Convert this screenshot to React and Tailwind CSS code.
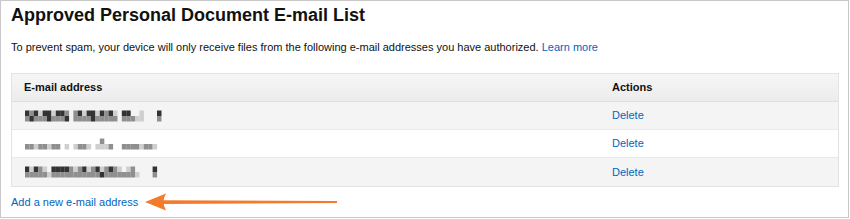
import React from "react";

const rows = [
  [
    [3,2,3,1,3,3,1,3,3,2,0,2,3,1,3,3,1,3,2,3,1,0,3,3,0,0,1,0,0,0,3],
    [2,3,2,2,2,3,2,2,2,3,0,2,2,2,2,3,2,2,2,2,2,0,2,2,2,1,1,0,0,0,2],
  ],
  [
    [0,0,0,0,0,0,0,0,0,0,0,0,0,0,0,0,0,2,0,0,0,0,0,0,0,0,0,0,0,0,0],
    [2,2,1,2,2,1,2,2,0,1,0,1,2,2,1,0,1,1,1,2,0,0,2,2,2,2,1,2,2,1,0],
  ],
  [
    [3,1,3,2,1,0,3,3,3,3,2,1,2,3,1,2,3,1,2,3,2,1,0,1,2,0,0,0,0,3,0],
    [2,2,2,2,2,1,2,2,2,2,2,2,2,2,2,2,2,3,2,2,2,2,2,2,2,1,0,0,0,2,0],
  ],
];
const row2extra = [[13, 1, 2], [16, 1, 3], [17, 1, 3], [19, 1, 3]];
const shades = ["transparent", "#cfcfcf", "#8f8f8f", "#333333"];

function Blur({ data }) {
  return (
    <svg width="140" height="12" viewBox="0 0 140 12">
      {data.map((r, ri) =>
        r.map((v, ci) =>
          v ? (
            <rect key={ri + "-" + ci} x={ci * 4.4} y={ri * 5.5 + 0.5} width="4.5" height="5.5" fill={shades[v]} />
          ) : null
        )
      )}
    </svg>
  );
}

export default function App() {
  return (
    <div
      className="w-[849px] h-[218px] border border-[#c8c8c8] bg-white text-[#111] px-[10px]"
      style={{ fontFamily: '"Liberation Sans", Arial, sans-serif' }}
    >
      <h1 className="text-[18px] font-bold leading-[22px] pt-[3px]">Approved Personal Document E-mail List</h1>
      <p className="text-[11px] leading-[14px] mt-[14px]">
        To prevent spam, your device will only receive files from the following e-mail addresses you have authorized.{" "}
        <span className="text-[#0066c0]">Learn more</span>
      </p>
      <div className="mt-[19px] w-[828px] border border-[#e3e3e3] text-[11px]">
        <div className="flex h-[28px] items-center bg-gradient-to-b from-[#f6f6f6] to-[#ececec] border-b border-[#dedede] font-bold">
          <div className="w-[600px] pl-[12px]">E-mail address</div>
          <div className="flex-1">Actions</div>
        </div>
        {rows.map((r, i) => (
          <div
            key={i}
            className={
              "flex h-[28px] items-center " +
              (i % 2 === 0 ? "bg-[#f4f4f4]" : "bg-white") +
              (i < 2 ? " border-b border-[#e9e9e9]" : "")
            }
          >
            <div className="w-[600px] pl-[13px] flex items-center">
              <Blur data={r} />
            </div>
            <div className="flex-1 text-[#0066c0]">Delete</div>
          </div>
        ))}
      </div>
      <div className="flex items-center mt-[8px] h-[14px]">
        <span className="text-[11px] leading-[14px] text-[#0066c0]">Add a new e-mail address</span>
        <svg width="196" height="18" viewBox="0 0 196 18" className="ml-[7px] shrink-0">
          <path d="M16 7.3 L192 7.9 L192 10.1 L16 10.9 Z" fill="#f47a2c" />
          <path d="M0 9 L21 0.5 Q16 9 21 17.5 Z" fill="#f47a2c" />
        </svg>
      </div>
    </div>
  );
}
